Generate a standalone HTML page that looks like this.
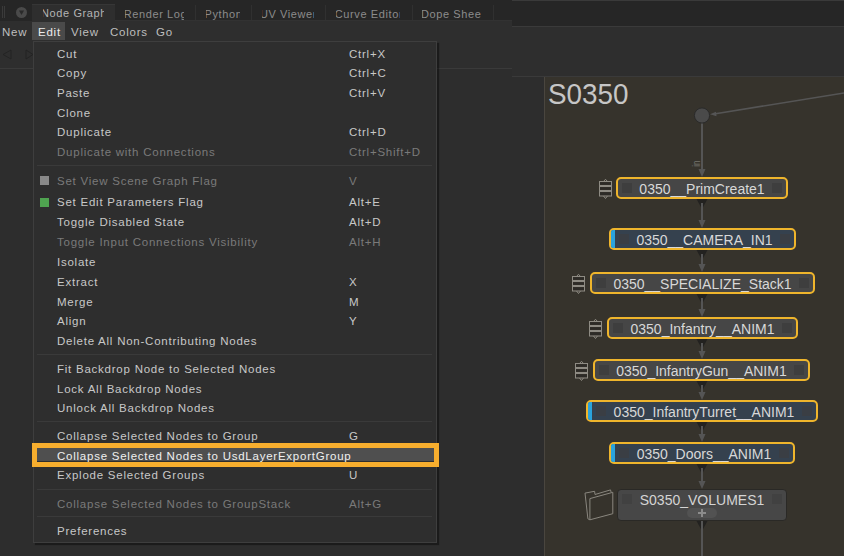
<!DOCTYPE html><html><head><meta charset="utf-8"><style>
*{box-sizing:border-box;margin:0;padding:0}
html,body{width:844px;height:556px;overflow:hidden;background:#2d2d2d;font-family:"Liberation Sans", sans-serif}
.a{position:absolute}
.t{position:absolute;white-space:nowrap;line-height:14px}
.mi{position:absolute;left:57px;white-space:nowrap;line-height:14px;font-size:11.5px;letter-spacing:0.76px;color:#c8c8c8}
.sc{position:absolute;left:349px;white-space:nowrap;line-height:14px;font-size:11.5px;letter-spacing:0.76px;color:#c8c8c8}
.d{color:#7a7a7a}
.tab{position:absolute;top:6.3px;height:14px;overflow:hidden;white-space:nowrap;font-size:11px;letter-spacing:0.6px;line-height:14px;color:#8a8a8a}
.node{position:absolute;height:22px;border:2px solid #efb52c;border-radius:5px;background:#464646}
.node.b{background:#35414e}
.node.b .sq{background:#3a3e44}
.nl{position:absolute;top:0.5px;left:0;right:0;text-align:center;font-size:14px;line-height:18px;color:#d8d8d8;white-space:nowrap}
.sq{position:absolute;top:4px;width:10px;height:10px;background:#3e3e3e}
.sep{position:absolute;left:37px;width:395px;height:1px;background:#3a3a3a}
</style></head><body>
<div class="a" style="left:0;top:0;width:512px;height:21px;background:#262626"></div>
<div class="a" style="left:2px;top:6px;width:1px;height:12px;background:#3a3a3a"></div>
<div class="a" style="left:4px;top:6px;width:1px;height:12px;background:#3a3a3a"></div>
<div class="a" style="left:16px;top:7px;width:11px;height:11px;border-radius:50%;background:#4a4a4a"></div>
<svg class="a" style="left:16px;top:7px" width="11" height="11"><path d="M3 3.5 L8 3.5 L5.5 8 Z" fill="#2a2a2a"/></svg>
<div class="a" style="left:32px;top:4px;width:83px;height:17px;background:#2e2e2e;border-top:1px solid #363636"></div>
<div class="tab" style="left:42.8px;width:60.9px;color:#b4b4b4;top:6.3px"><span style="position:absolute;left:-10.3px;top:0;width:83px;text-align:center">Node Graph</span></div>
<div class="tab" style="left:125.1px;width:58.7px;color:#8c8c8c;top:7.3px"><span style="position:absolute;left:-9.6px;top:0;width:80px;text-align:center">Render Log</span></div>
<div class="tab" style="left:205.5px;width:34.2px;color:#8c8c8c;top:7.3px"><span style="position:absolute;left:-10.0px;top:0;width:56px;text-align:center">Python</span></div>
<div class="tab" style="left:262.0px;width:52.0px;color:#8c8c8c;top:7.3px"><span style="position:absolute;left:-10.5px;top:0;width:74px;text-align:center">UV Viewer</span></div>
<div class="tab" style="left:335.7px;width:64.0px;color:#8c8c8c;top:7.3px"><span style="position:absolute;left:-10.2px;top:0;width:87px;text-align:center">Curve Editor</span></div>
<div class="tab" style="left:421.8px;width:59.2px;color:#8c8c8c;top:7.3px"><span style="position:absolute;left:-9.3px;top:0;width:81px;text-align:center">Dope Sheet</span></div>
<div class="a" style="left:115px;top:20px;width:397px;height:1px;background:#323232"></div>
<div class="a" style="left:195px;top:5px;width:1px;height:15px;background:#303030"></div>
<div class="a" style="left:251px;top:5px;width:1px;height:15px;background:#303030"></div>
<div class="a" style="left:325px;top:5px;width:1px;height:15px;background:#303030"></div>
<div class="a" style="left:412px;top:5px;width:1px;height:15px;background:#303030"></div>
<div class="a" style="left:493px;top:5px;width:1px;height:15px;background:#303030"></div>
<div class="a" style="left:0;top:21px;width:512px;height:47px;background:#2e2e2e"></div>
<div class="a" style="left:32px;top:22px;width:33px;height:18px;background:#4a4a4a"></div>
<div class="t" style="left:2px;top:25.2px;font-size:11.5px;letter-spacing:0.76px;color:#bebebe">New</div>
<div class="t" style="left:38px;top:25.2px;font-size:11.5px;letter-spacing:0.76px;color:#ececec">Edit</div>
<div class="t" style="left:71px;top:25.2px;font-size:11.5px;letter-spacing:0.76px;color:#bebebe">View</div>
<div class="t" style="left:110px;top:25.2px;font-size:11.5px;letter-spacing:0.76px;color:#bebebe">Colors</div>
<div class="t" style="left:156px;top:25.2px;font-size:11.5px;letter-spacing:0.76px;color:#bebebe">Go</div>
<svg class="a" style="left:0;top:46px" width="33" height="18"><path d="M11 4 L3 8.5 L11 13 Z" fill="none" stroke="#232323" stroke-width="0.9"/><path d="M26 4 L33 8.5 L26 13 Z" fill="none" stroke="#232323" stroke-width="0.9"/></svg>
<div class="a" style="left:0;top:68px;width:512px;height:1px;background:#3a3a3a"></div>
<div class="a" style="left:512px;top:0;width:332px;height:1px;background:#3a3a3a"></div>
<div class="a" style="left:512px;top:1px;width:332px;height:25px;background:#262626"></div>
<div class="a" style="left:512px;top:26px;width:332px;height:1px;background:#3a3a3a"></div>
<div class="a" style="left:512px;top:27px;width:332px;height:49px;background:#2e2e2e"></div>
<div class="a" style="left:512px;top:76px;width:332px;height:1px;background:#3a3a3a"></div>
<div class="a" style="left:544px;top:77px;width:300px;height:479px;background:#36332c;border-left:1px solid #4a463f"></div>
<div class="t" style="left:547.6px;top:78.5px;font-size:29px;line-height:30px;color:#c6c6c6;transform:scaleX(0.96);transform-origin:0 0">S0350</div>
<svg class="a" style="left:0;top:0" width="844" height="556"><line x1="844" y1="93" x2="714" y2="114" stroke="#555555" stroke-width="1.6"/><path d="M710 114.3 L716 111.8 L716.5 116.3 Z" fill="#555555"/><path d="M696.5 199 L707.5 199 L702 209 Z" fill="#232220"/><path d="M696.5 250 L707.5 250 L702 260 Z" fill="#232220"/><path d="M696.5 294 L707.5 294 L702 304 Z" fill="#232220"/><path d="M696.5 339 L707.5 339 L702 349 Z" fill="#232220"/><path d="M696.5 381 L707.5 381 L702 391 Z" fill="#232220"/><path d="M696.5 422 L707.5 422 L702 432 Z" fill="#232220"/><path d="M696.5 464 L707.5 464 L702 474 Z" fill="#232220"/><path d="M696.5 521 L707.5 521 L702 531 Z" fill="#232220"/><line x1="702" y1="123" x2="702" y2="172" stroke="#555555" stroke-width="2"/><path d="M698.5 169 L705.5 169 L702 177 Z" fill="#555555"/><line x1="702" y1="203" x2="702" y2="223" stroke="#555555" stroke-width="2"/><path d="M698.5 220 L705.5 220 L702 228 Z" fill="#555555"/><line x1="702" y1="254" x2="702" y2="267" stroke="#555555" stroke-width="2"/><path d="M698.5 264 L705.5 264 L702 272 Z" fill="#555555"/><line x1="702" y1="298" x2="702" y2="312" stroke="#555555" stroke-width="2"/><path d="M698.5 309 L705.5 309 L702 317 Z" fill="#555555"/><line x1="702" y1="343" x2="702" y2="354" stroke="#555555" stroke-width="2"/><path d="M698.5 351 L705.5 351 L702 359 Z" fill="#555555"/><line x1="702" y1="385" x2="702" y2="395" stroke="#555555" stroke-width="2"/><path d="M698.5 392 L705.5 392 L702 400 Z" fill="#555555"/><line x1="702" y1="426" x2="702" y2="437" stroke="#555555" stroke-width="2"/><path d="M698.5 434 L705.5 434 L702 442 Z" fill="#555555"/><line x1="702" y1="468" x2="702" y2="484" stroke="#555555" stroke-width="2"/><path d="M698.5 481 L705.5 481 L702 489 Z" fill="#555555"/><line x1="702" y1="521" x2="702" y2="556" stroke="#555555" stroke-width="2"/><circle cx="702" cy="115.5" r="7.6" fill="#4a4a4a" stroke="#2a2a2a" stroke-width="1"/><text x="0" y="0" transform="translate(700 166.8) rotate(-90) scale(0.72 1)" font-family="Liberation Sans" font-size="11" fill="#75736d">in</text></svg>
<div class="node" style="left:616px;top:177px;width:172px">
<div class="sq" style="left:4px"></div><div class="sq" style="right:4px"></div>
<div class="nl">0350__PrimCreate1</div></div>
<svg class="a" style="left:598px;top:177px" width="15" height="23"><g fill="none" stroke="#8e8b83" stroke-width="1"><path d="M5.5 4.5 L7.5 2.3 L9.5 4.5"/><rect x="1.5" y="4.5" width="12" height="4"/><rect x="1.5" y="9.5" width="12" height="4"/><rect x="1.5" y="14.5" width="12" height="4.5"/><path d="M5.5 19 L7.5 21.5 L9.5 19"/></g><g fill="#2d2b27"><rect x="2" y="5.5" width="11" height="2"/><rect x="2" y="10.5" width="11" height="2"/><rect x="2" y="15.5" width="11" height="2.5"/></g></svg>
<div class="node b" style="left:609px;top:228px;width:187px">
<div class="sq" style="left:8px"></div><div class="sq" style="right:4px"></div>
<div class="a" style="left:0;top:0;width:4px;height:18px;background:#2aa3dc;border-radius:2px 0 0 2px"></div>
<div class="nl" style="left:4px">0350__CAMERA_IN1</div></div>
<div class="node" style="left:590px;top:272px;width:225px">
<div class="sq" style="left:4px"></div><div class="sq" style="right:4px"></div>
<div class="nl">0350__SPECIALIZE_Stack1</div></div>
<svg class="a" style="left:571px;top:272px" width="15" height="23"><g fill="none" stroke="#8e8b83" stroke-width="1"><path d="M5.5 4.5 L7.5 2.3 L9.5 4.5"/><rect x="1.5" y="4.5" width="12" height="4"/><rect x="1.5" y="9.5" width="12" height="4"/><rect x="1.5" y="14.5" width="12" height="4.5"/><path d="M5.5 19 L7.5 21.5 L9.5 19"/></g><g fill="#2d2b27"><rect x="2" y="5.5" width="11" height="2"/><rect x="2" y="10.5" width="11" height="2"/><rect x="2" y="15.5" width="11" height="2.5"/></g></svg>
<div class="node" style="left:607px;top:317px;width:191px">
<div class="sq" style="left:4px"></div><div class="sq" style="right:4px"></div>
<div class="nl">0350_Infantry__ANIM1</div></div>
<svg class="a" style="left:588px;top:317px" width="15" height="23"><g fill="none" stroke="#8e8b83" stroke-width="1"><path d="M5.5 4.5 L7.5 2.3 L9.5 4.5"/><rect x="1.5" y="4.5" width="12" height="4"/><rect x="1.5" y="9.5" width="12" height="4"/><rect x="1.5" y="14.5" width="12" height="4.5"/><path d="M5.5 19 L7.5 21.5 L9.5 19"/></g><g fill="#2d2b27"><rect x="2" y="5.5" width="11" height="2"/><rect x="2" y="10.5" width="11" height="2"/><rect x="2" y="15.5" width="11" height="2.5"/></g></svg>
<div class="node" style="left:593px;top:359px;width:217px">
<div class="sq" style="left:4px"></div><div class="sq" style="right:4px"></div>
<div class="nl">0350_InfantryGun__ANIM1</div></div>
<svg class="a" style="left:574px;top:359px" width="15" height="23"><g fill="none" stroke="#8e8b83" stroke-width="1"><path d="M5.5 4.5 L7.5 2.3 L9.5 4.5"/><rect x="1.5" y="4.5" width="12" height="4"/><rect x="1.5" y="9.5" width="12" height="4"/><rect x="1.5" y="14.5" width="12" height="4.5"/><path d="M5.5 19 L7.5 21.5 L9.5 19"/></g><g fill="#2d2b27"><rect x="2" y="5.5" width="11" height="2"/><rect x="2" y="10.5" width="11" height="2"/><rect x="2" y="15.5" width="11" height="2.5"/></g></svg>
<div class="node b" style="left:586px;top:400px;width:232px">
<div class="sq" style="left:8px"></div><div class="sq" style="right:4px"></div>
<div class="a" style="left:0;top:0;width:4px;height:18px;background:#2aa3dc;border-radius:2px 0 0 2px"></div>
<div class="nl" style="left:4px">0350_InfantryTurret__ANIM1</div></div>
<div class="node b" style="left:609px;top:442px;width:186px">
<div class="sq" style="left:8px"></div><div class="sq" style="right:4px"></div>
<div class="a" style="left:0;top:0;width:4px;height:18px;background:#2aa3dc;border-radius:2px 0 0 2px"></div>
<div class="nl" style="left:4px">0350_Doors__ANIM1</div></div>
<div class="a" style="left:617px;top:489px;width:170px;height:32px;background:#474747;border:1px solid #2a2926;border-radius:4px">
<div class="sq" style="left:4px;top:4px;width:10px;height:10px;background:#414141"></div><div class="sq" style="right:4px;top:4px;width:10px;height:10px;background:#414141"></div>
<div class="nl" style="top:1px;color:#d4d4d4">S0350_VOLUMES1</div>
<div class="a" style="left:69px;top:18px;width:30px;height:10px;border-radius:5px;background:#525252"></div>
<div class="a" style="left:80px;top:19px;width:8px;height:8px"><div class="a" style="left:3px;top:0;width:2px;height:8px;background:#8c8c8c"></div><div class="a" style="left:0;top:3px;width:8px;height:2px;background:#8c8c8c"></div></div>
</div>
<svg class="a" style="left:578px;top:482px" width="40" height="44"><path d="M7 11.1 L16.6 9.3 L17 12.5 L32.5 7.9 L33.1 10.1 M7 11.1 L9.9 36.8 L11.9 37.8 M11.9 16.6 L34.8 10.3 L34.8 31.7 L11.9 37.8 Z" fill="none" stroke="#8a877f" stroke-width="1" stroke-linejoin="round"/></svg>
<div class="a" style="left:33px;top:41px;width:404px;height:502px;background:#2e2e2e;border:1px solid #3e3e3e;box-shadow:2px 2px 1px rgba(0,0,0,0.4)"></div>
<div class="sep" style="top:165px"></div>
<div class="sep" style="top:354px"></div>
<div class="sep" style="top:421px"></div>
<div class="sep" style="top:489px"></div>
<div class="sep" style="top:516px"></div>
<div class="a" style="left:37px;top:448px;width:397px;height:13px;background:#4f4f4f"></div>
<div class="a" style="left:32px;top:443px;width:407px;height:24px;border:5px solid #f7ae2e"></div>
<div class="a" style="left:40px;top:176px;width:9px;height:9px;background:#898989"></div>
<div class="a" style="left:40px;top:198px;width:9px;height:9px;background:#4fa350"></div>
<div class="mi" style="top:46.6px">Cut</div>
<div class="sc" style="top:46.6px">Ctrl+X</div>
<div class="mi" style="top:66.0px">Copy</div>
<div class="sc" style="top:66.0px">Ctrl+C</div>
<div class="mi" style="top:86.1px">Paste</div>
<div class="sc" style="top:86.1px">Ctrl+V</div>
<div class="mi" style="top:105.5px">Clone</div>
<div class="mi" style="top:124.8px">Duplicate</div>
<div class="sc" style="top:124.8px">Ctrl+D</div>
<div class="mi d" style="top:144.9px">Duplicate with Connections</div>
<div class="sc d" style="top:144.9px">Ctrl+Shift+D</div>
<div class="mi d" style="top:173.9px">Set View Scene Graph Flag</div>
<div class="sc d" style="top:173.9px">V</div>
<div class="mi" style="top:194.8px">Set Edit Parameters Flag</div>
<div class="sc" style="top:194.8px">Alt+E</div>
<div class="mi" style="top:215.4px">Toggle Disabled State</div>
<div class="sc" style="top:215.4px">Alt+D</div>
<div class="mi d" style="top:235.1px">Toggle Input Connections Visibility</div>
<div class="sc d" style="top:235.1px">Alt+H</div>
<div class="mi" style="top:255.3px">Isolate</div>
<div class="mi" style="top:274.9px">Extract</div>
<div class="sc" style="top:274.9px">X</div>
<div class="mi" style="top:294.6px">Merge</div>
<div class="sc" style="top:294.6px">M</div>
<div class="mi" style="top:314.0px">Align</div>
<div class="sc" style="top:314.0px">Y</div>
<div class="mi" style="top:333.6px">Delete All Non-Contributing Nodes</div>
<div class="mi" style="top:361.8px">Fit Backdrop Node to Selected Nodes</div>
<div class="mi" style="top:381.8px">Lock All Backdrop Nodes</div>
<div class="mi" style="top:401.1px">Unlock All Backdrop Nodes</div>
<div class="mi" style="top:429.2px">Collapse Selected Nodes to Group</div>
<div class="sc" style="top:429.2px">G</div>
<div class="mi" style="top:448.5px;color:#f0f0f0">Collapse Selected Nodes to UsdLayerExportGroup</div>
<div class="mi" style="top:468.3px">Explode Selected Groups</div>
<div class="sc" style="top:468.3px">U</div>
<div class="mi d" style="top:496.5px">Collapse Selected Nodes to GroupStack</div>
<div class="sc d" style="top:496.5px">Alt+G</div>
<div class="mi" style="top:524.0px">Preferences</div>
</body></html>
